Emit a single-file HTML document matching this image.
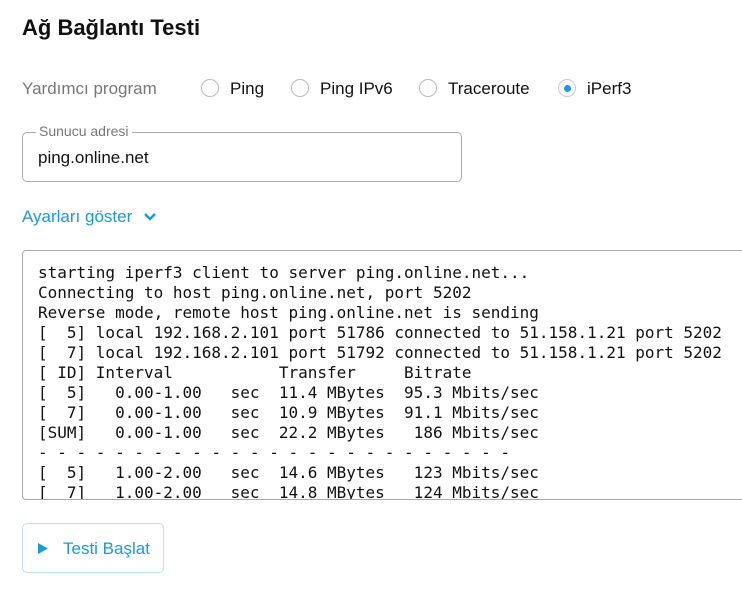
<!DOCTYPE html>
<html><head><style>
body{margin:0;background:#fff;font-family:"Liberation Sans",Arial,sans-serif;width:742px;height:592px;overflow:hidden;position:relative}
.a{position:absolute}
h1{position:absolute;left:22px;top:15px;margin:0;font-size:22px;font-weight:bold;color:#111}
.lbl{left:22px;top:79px;font-size:17px;color:#777}
.r{top:79px;width:18px;height:18px;border:1px solid #bbb;border-radius:50%;box-sizing:border-box}
.rt{top:79px;font-size:17px;color:#111}
.in{left:22px;top:132px;width:440px;height:50px;border:1px solid #aaa;border-radius:5px;box-sizing:border-box}
.leg{left:36px;top:123px;background:#fff;padding:0 3px;font-size:14px;color:#777}
.val{left:38px;top:148px;font-size:17px;color:#111}
.link{left:22px;top:207px;font-size:17px;color:#1a9ad6}
.term{left:22px;top:250px;width:740px;height:250px;border:1px solid #aaa;border-radius:4px;box-sizing:border-box;overflow:hidden}
pre{margin:0;position:absolute;left:15px;top:12px;font-family:"DejaVu Sans Mono","Liberation Mono",monospace;font-size:16px;line-height:20px;color:#111}
.btn{left:22px;top:523px;width:142px;height:50px;border:1px solid #bfe0f0;border-radius:5px;box-sizing:border-box}
</style></head><body>
<h1>Ağ Bağlantı Testi</h1>
<div class="a lbl">Yardımcı program</div>
<div class="a r" style="left:201px"></div><div class="a rt" style="left:230px">Ping</div>
<div class="a r" style="left:291px"></div><div class="a rt" style="left:320px">Ping IPv6</div>
<div class="a r" style="left:419px"></div><div class="a rt" style="left:448px">Traceroute</div>
<div class="a r" style="left:558px;border-color:#ccc"><div style="position:absolute;left:4.5px;top:4.5px;width:7px;height:7px;border-radius:50%;background:#1a9ad6"></div></div><div class="a rt" style="left:587px">iPerf3</div>
<div class="a in"></div>
<div class="a leg">Sunucu adresi</div>
<div class="a val">ping.online.net</div>
<div class="a link">Ayarları göster <svg width="14" height="10" style="margin-left:6px" viewBox="0 0 14 10"><path d="M2 2l5 5 5-5" fill="none" stroke="#1a9ad6" stroke-width="2.4"/></svg></div>
<div class="a term"><pre>starting iperf3 client to server ping.online.net...
Connecting to host ping.online.net, port 5202
Reverse mode, remote host ping.online.net is sending
[  5] local 192.168.2.101 port 51786 connected to 51.158.1.21 port 5202
[  7] local 192.168.2.101 port 51792 connected to 51.158.1.21 port 5202
[ ID] Interval           Transfer     Bitrate
[  5]   0.00-1.00   sec  11.4 MBytes  95.3 Mbits/sec
[  7]   0.00-1.00   sec  10.9 MBytes  91.1 Mbits/sec
[SUM]   0.00-1.00   sec  22.2 MBytes   186 Mbits/sec
- - - - - - - - - - - - - - - - - - - - - - - - -
[  5]   1.00-2.00   sec  14.6 MBytes   123 Mbits/sec
[  7]   1.00-2.00   sec  14.8 MBytes   124 Mbits/sec</pre></div>
<div class="a btn"><svg class="a" style="left:15px;top:19px" width="10" height="11" viewBox="0 0 10 11"><path d="M0 0L10 5.5 0 11z" fill="#1a9ad6"/></svg><div class="a" style="left:40px;top:15px;font-size:17px;color:#1a9ad6;white-space:nowrap">Testi Başlat</div></div>
</body></html>
